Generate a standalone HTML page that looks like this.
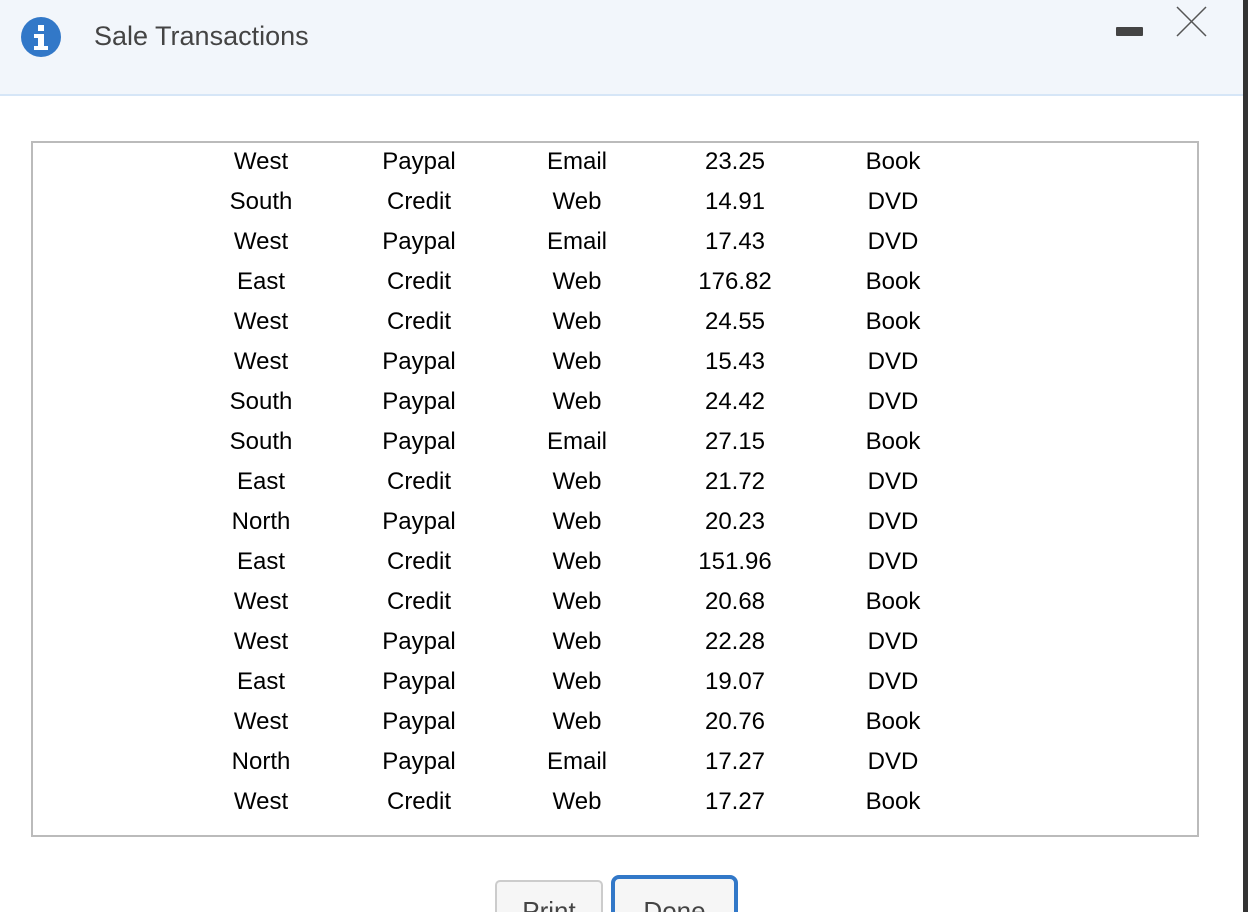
<!DOCTYPE html>
<html><head><style>
html,body{margin:0;width:1248px;height:912px;overflow:hidden}
body{background:#fff;font-family:"Liberation Sans",sans-serif;position:relative}
.hdr{position:absolute;left:0;top:0;width:1243px;height:94px;background:#f2f6fb;border-bottom:2px solid #d6e6f7}
.bar{position:absolute;left:1243px;top:0;width:5px;height:912px;background:#333}
.ic{position:absolute;left:21px;top:17px;width:40px;height:40px;border-radius:50%;background:#3278c8}
.title{position:absolute;left:94px;top:21px;font-size:27px;color:#444}
.min{position:absolute;left:1116px;top:27px;width:27px;height:9px;background:#444;border-radius:1px}
.box{position:absolute;left:31px;top:141px;width:1164px;height:692px;border:2px solid #bbb}
.row{position:absolute;left:0;height:40px;font-size:24px;color:#000}
.row span{position:absolute;width:150px;text-align:center;top:4px}
.btn{position:absolute;background:#f6f6f6;font-size:26px;color:#444;text-align:center;overflow:hidden}
</style></head><body>
<div class="hdr"></div>
<div class="bar"></div>
<div class="ic"><svg width="40" height="40"><rect x="17" y="8" width="6" height="6" fill="#fff"/><path d="M13 17h10v12h4v4H13v-4h4v-8h-4z" fill="#fff"/></svg></div>
<div class="title">Sale Transactions</div>
<div class="min"></div>
<svg style="position:absolute;left:1175px;top:5px" width="33" height="33"><path d="M2 2L31 31M31 2L2 31" stroke="#555" stroke-width="1.5"/></svg>
<div class="box"></div>
<div class="btn" style="left:495px;top:880px;width:104px;height:40px;border:2px solid #ccc;border-radius:5px;line-height:58px">Print</div>
<div class="btn" style="left:611px;top:875px;width:119px;height:45px;border:4px solid #3278c8;border-radius:8px;line-height:64px">Done</div>
<div style="position:absolute;left:0;top:0">
<script>
var d=`West Paypal Email 23.25 Book
South Credit Web 14.91 DVD
West Paypal Email 17.43 DVD
East Credit Web 176.82 Book
West Credit Web 24.55 Book
West Paypal Web 15.43 DVD
South Paypal Web 24.42 DVD
South Paypal Email 27.15 Book
East Credit Web 21.72 DVD
North Paypal Web 20.23 DVD
East Credit Web 151.96 DVD
West Credit Web 20.68 Book
West Paypal Web 22.28 DVD
East Paypal Web 19.07 DVD
West Paypal Web 20.76 Book
North Paypal Email 17.27 DVD
West Credit Web 17.27 Book`.split("\n");
var c=[261,419,577,735,893],h="";
d.forEach(function(r,i){h+='<div class="row" style="top:'+(144+i*40)+'px">';r.split(" ").forEach(function(t,j){h+='<span style="left:'+(c[j]-75)+'px">'+t+'</span>'});h+='</div>'});
document.write(h);
</script>
</div>
</body></html>
